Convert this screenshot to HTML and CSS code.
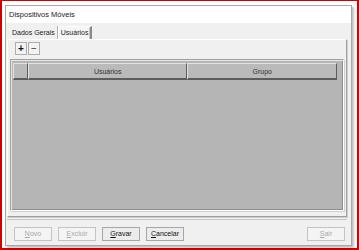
FILE: index.html
```html
<!DOCTYPE html>
<html lang="pt-BR">
<head>
    <meta charset="UTF-8">
    <title>Dispositivos Móveis</title>
    <link rel="stylesheet" href="styles.css">
</head>
<body>
    <div class="frame">
        <div class="window">
            <div class="title">Dispositivos Móveis</div>

            <div class="content">
                <div class="tabs">
                    <div class="tab">Dados Gerais</div>
                    <div class="tab active">Usuários</div>
                </div>

                <div class="panel">
                    <div class="toolbar">
                        <div class="tool-btn">+</div>
                        <div class="tool-btn">&minus;</div>
                    </div>

                    <div class="grid">
                        <div class="grid-header">
                            <div class="col col-indicator"></div>
                            <div class="col col-user">Usuários</div>
                            <div class="col col-group">Grupo</div>
                        </div>
                    </div>
                </div>

                <div class="footer">
                    <div class="btn disabled"><u>N</u>ovo</div>
                    <div class="btn disabled"><u>E</u>xcluir</div>
                    <div class="btn"><u>G</u>ravar</div>
                    <div class="btn"><u>C</u>ancelar</div>
                    <div class="spacer"></div>
                    <div class="btn disabled"><u>S</u>air</div>
                </div>
            </div>
        </div>
    </div>
</body>
</html>
```

FILE: styles.css
```css
* {
    margin: 0;
    padding: 0;
    box-sizing: border-box;
}

body {
    font-family: 'Liberation Sans', Arial, sans-serif;
    font-size: 7px;
    color: #222;
    background: #fff;
    width: 359px;
    height: 250px;
    overflow: hidden;
}

.frame {
    width: 359px;
    height: 250px;
    border: 1px solid #d40000;
    border-left-width: 2px;
    border-right-width: 2px;
    border-bottom-width: 2px;
    padding: 4px 5px 2px 3px;
    background: #fff;
}

.window {
    height: 100%;
    display: flex;
    flex-direction: column;
    border: 1px solid #a8a8a8;
    box-shadow: 2px 2px 2px rgba(0, 0, 0, 0.25);
}

.title {
    height: 17px;
    line-height: 17px;
    padding-left: 3px;
    font-size: 7.5px;
    background: #fff;
    color: #1a1a1a;
}

.content {
    flex: 1;
    display: flex;
    flex-direction: column;
    background: #f0f0f0;
    padding: 0 4px 0 1px;
}

.tabs {
    display: flex;
    align-items: flex-end;
    height: 16px;
    padding-left: 3px;
}

.tab {
    height: 12px;
    line-height: 12px;
    padding: 0 2px;
    color: #222;
}

.tab.active {
    height: 13px;
    line-height: 12px;
    margin-left: 1px;
    background: #f4f4f4;
    border: 1px solid #fff;
    border-right: 2px solid #8a8a8a;
    border-bottom: none;
    box-shadow: inset -1px 0 0 #c8c8c8, -1px 0 0 #b0b0b0;
    padding: 0 2px;
}

.panel {
    flex: 1;
    display: flex;
    flex-direction: column;
    border: 1px solid #fff;
    border-right-color: #a0a0a0;
    border-bottom-color: #a0a0a0;
    box-shadow: 1px 1px 0 #d0d0d0;
    padding: 2px 2px 5px 2px;
}

.toolbar {
    display: flex;
    gap: 1px;
    padding-left: 5px;
    height: 14px;
    margin-bottom: 3px;
}

.tool-btn {
    width: 12px;
    height: 13px;
    line-height: 12px;
    text-align: center;
    font-size: 10px;
    font-weight: bold;
    background: #f2f2f2;
    border: 1px solid #adadad;
    color: #111;
}

.tool-btn + .tool-btn {
    font-weight: normal;
    color: #333;
}

.grid {
    flex: 1;
    background: #b5b5b5;
    border: 1px solid #a0a0a0;
    border-right-color: #fff;
    border-bottom-color: #fff;
    box-shadow: inset 1px 1px 0 #e6e6e6, inset -1px -1px 0 #8c8c8c, 1px 1px 0 #cfcfcf;
    padding: 3px 6px 0 2px;
}

.grid-header {
    display: flex;
    height: 17px;
}

.col {
    height: 17px;
    line-height: 15px;
    text-align: center;
    background: #bababa;
    border-top: 1px solid #e2e2e2;
    border-left: 1px solid #e2e2e2;
    border-right: 1px solid #5c5c5c;
    border-bottom: 2px solid #5c5c5c;
    color: #333;
}

.col-indicator {
    width: 15px;
}

.col-user {
    width: 160px;
}

.col-group {
    width: 150px;
}

.footer {
    height: 26px;
    display: flex;
    align-items: center;
    gap: 6px;
    padding: 3px 2px 0 7px;
    border-top: 1px solid #c8c8c8;
    margin-top: 2px;
}

.spacer {
    flex: 1;
}

.btn {
    width: 38px;
    height: 14px;
    line-height: 12px;
    text-align: center;
    background: #ececec;
    border: 1px solid #a6a6a6;
    color: #111;
}

.btn.disabled {
    color: #a8a8a8;
    border-color: #c4c4c4;
    background: #f4f4f4;
}
```
